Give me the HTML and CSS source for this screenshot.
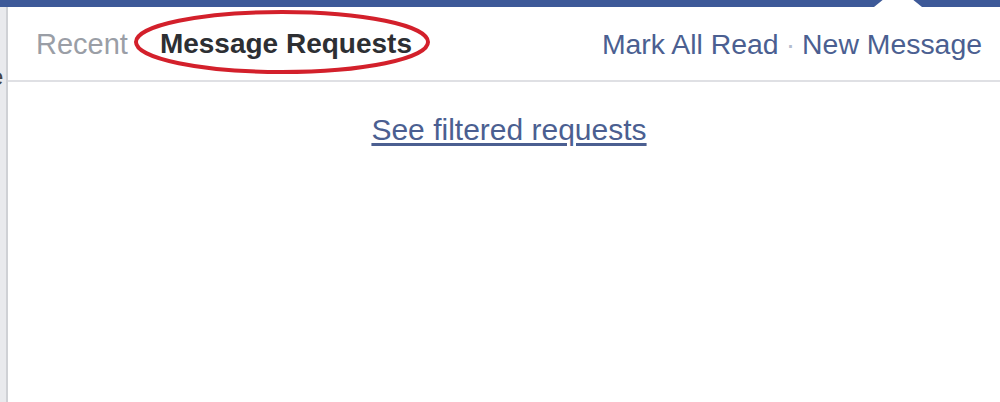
FILE: index.html
```html
<!DOCTYPE html>
<html>
<head>
    <meta charset="utf-8">
    <meta name="viewport" content="width=device-width, initial-scale=1">
    <title>Message Requests</title>
    <link rel="stylesheet" href="styles.css">
</head>
<body>
    <div class="topbar">
        <span class="beak"></span>
    </div>

    <div class="main">
        <div class="side">
            <span class="side-letter">e</span>
        </div>

        <div class="panel">
            <div class="header">
                <div class="tabs">
                    <a class="tab">Recent</a>
                    <a class="tab active">
                        Message Requests
                        <!-- red marker drawn over the tab -->
                        <svg class="circled" viewBox="0 0 300 66" preserveAspectRatio="none">
                            <ellipse cx="150" cy="33" rx="147" ry="30" fill="none" stroke="#d3202b" stroke-width="4"/>
                        </svg>
                    </a>
                </div>
                <div class="actions">
                    <a class="action">Mark All Read</a>
                    <span class="dot">·</span>
                    <a class="action">New Message</a>
                </div>
            </div>

            <div class="content">
                <a class="filtered">See filtered requests</a>
            </div>
        </div>
    </div>
</body>
</html>
```

FILE: styles.css
```css
body {
    margin: 0;
    font-family: "Liberation Sans", Arial, sans-serif;
    background-color: #fff;
    height: 402px;
    overflow: hidden;
}
a {
    cursor: pointer;
}
.topbar {
    position: relative;
    height: 7px;
    background-color: #3d5998;
}
.beak {
    position: absolute;
    left: 874px;
    top: 0;
    width: 48px;
    height: 7px;
    background-color: #fff;
    clip-path: polygon(0 100%, 18% 0, 82% 0, 100% 100%);
}
.main {
    display: flex;
    height: 395px;
}
.side {
    width: 6px;
    background-color: #e9eaed;
    border-right: 2px solid #cfd1d5;
    overflow: hidden;
    padding-top: 56px;
}
.side-letter {
    display: block;
    margin-left: -10px;
    font-size: 24px;
    color: #444;
}
.panel {
    flex: 1;
    display: flex;
    flex-direction: column;
}
.header {
    display: flex;
    justify-content: space-between;
    align-items: center;
    height: 71px;
    padding: 2px 18px 0 28px;
    border-bottom: 2px solid #dfe0e4;
    font-size: 29px;
}
.tabs {
    display: flex;
    gap: 32px;
}
.tab {
    color: #9a9ea6;
}
.tab.active {
    position: relative;
    color: #2d2f33;
    font-size: 28px;
    font-weight: bold;
}
.circled {
    position: absolute;
    left: -27px;
    top: -19px;
    width: 298px;
    height: 66px;
}
.actions {
    display: flex;
    align-items: center;
    gap: 7px;
    font-size: 28.4px;
}
.action {
    color: #4b5f91;
}
.dot {
    color: #b4bccf;
}
.content {
    text-align: center;
    padding-top: 31px;
}
.filtered {
    font-size: 30px;
    color: #4b5f91;
    text-decoration: underline;
    text-underline-offset: 3px;
    margin-left: 10px;
}
```
